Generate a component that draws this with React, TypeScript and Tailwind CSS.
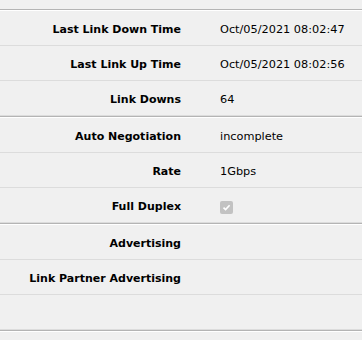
import React from "react";

type Row = { label: string; value?: React.ReactNode };

const sections: Row[][] = [
  [
    { label: "Last Link Down Time", value: "Oct/05/2021 08:02:47" },
    { label: "Last Link Up Time", value: "Oct/05/2021 08:02:56" },
    { label: "Link Downs", value: "64" },
  ],
  [
    { label: "Auto Negotiation", value: "incomplete" },
    { label: "Rate", value: "1Gbps" },
    { label: "Full Duplex", value: "__check__" },
  ],
  [
    { label: "Advertising" },
    { label: "Link Partner Advertising" },
    { label: "" },
  ],
];

function Check() {
  return (
    <span className="inline-flex h-[13px] w-[13px] items-center justify-center rounded-[2px] bg-[#c2c2c2] align-middle">
      <svg width="9" height="9" viewBox="0 0 9 9">
        <path d="M1.5 4.6 L3.6 6.6 L7.6 2.2" fill="none" stroke="#ffffff" strokeWidth="1.6" />
      </svg>
    </span>
  );
}

export default function App() {
  return (
    <div
      className="h-[340px] w-[362px] overflow-hidden bg-[#f0f0f0] pt-[9px] text-[11px] text-black"
      style={{ fontFamily: '"DejaVu Sans", Verdana, sans-serif' }}
    >
      {sections.map((rows, si) => (
        <div key={si}>
          <div className="h-px bg-[#b4b4b4]" />
          <div className="h-px bg-white" />
          {rows.map((r, ri) => (
            <div
              key={ri}
              className="flex h-[35px] items-center border-b border-[#dcdcdc] pt-[5px]"
            >
              <div className="w-[181px] shrink-0 text-right font-bold">{r.label}</div>
              <div className="flex pl-[39px] text-[11.3px]">
                {r.value === "__check__" ? <Check /> : r.value}
              </div>
            </div>
          ))}
        </div>
      ))}
      <div className="h-px bg-[#b4b4b4]" />
      <div className="h-px bg-white" />
    </div>
  );
}
